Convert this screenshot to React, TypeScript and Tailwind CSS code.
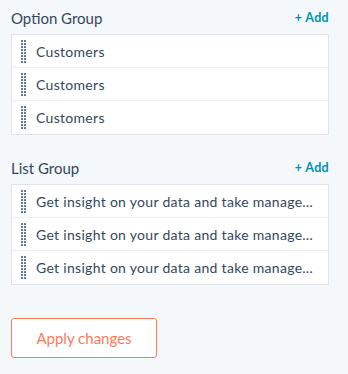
const options = ["Customers", "Customers", "Customers"];
const items = [
  "Get insight on your data and take management decisions faster",
  "Get insight on your data and take management decisions faster",
  "Get insight on your data and take management decisions faster",
];

function DragHandle() {
  const dots = [];
  for (let r = 0; r < 8; r++) {
    for (let c = 0; c < 2; c++) {
      dots.push(<rect key={`${r}-${c}`} x={c * 3} y={r * 3} width="2" height="2" rx="0.6" fill="#516f90" />);
    }
  }
  return (
    <svg width="5" height="23" viewBox="0 0 5 23" className="shrink-0">
      {dots}
    </svg>
  );
}

function Group({ title, rows }: { title: string; rows: string[] }) {
  return (
    <section>
      <div className="h-6 flex items-center justify-between">
        <h3 className="text-[15px] text-[#33475b]">{title}</h3>
        <button className="text-[12.5px] font-bold text-[#0091ae] tracking-wide">+ Add</button>
      </div>
      <ul className="mt-1 bg-white border border-[#dfe3eb] divide-y divide-[#eaf0f6]">
        {rows.map((text, i) => (
          <li key={i} className="h-[33px] flex items-center pl-[9px] pr-2 gap-[10px]">
            <DragHandle />
            <span className="truncate text-[14px] tracking-[0.3px] text-[#33475b]">{text}</span>
          </li>
        ))}
      </ul>
    </section>
  );
}

export default function App() {
  return (
    <div className="w-[348px] h-[374px] bg-[#f5f8fa] pl-[11px] pr-[19px] pt-[6px]" style={{ fontFamily: "Lato, 'Open Sans', sans-serif" }}>
      <Group title="Option Group" rows={options} />
      <div className="mt-[21px]">
        <Group title="List Group" rows={items} />
      </div>
      <button className="mt-[33px] w-[146px] h-10 bg-white border border-[#ff7a59] rounded-[3px] text-[15px] text-[#ff7a59]">
        Apply changes
      </button>
    </div>
  );
}
